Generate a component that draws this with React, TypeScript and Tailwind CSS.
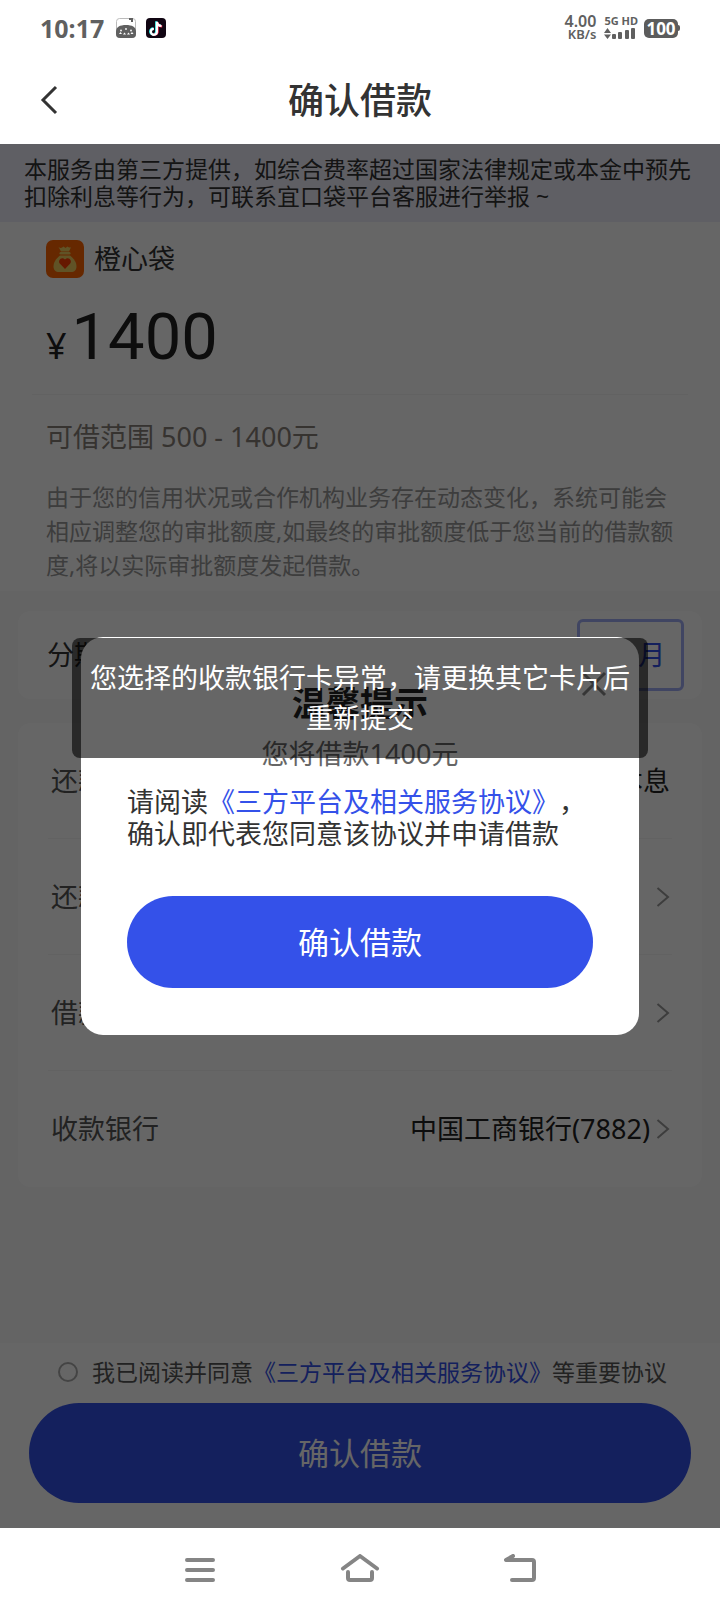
import { useState } from 'react'

const details = [
  { label: '还款方式', value: '等额本息', arrow: false, gap: '' },
  { label: '还款计划', value: '查看', arrow: true, gap: 'mr-5' },
  { label: '借款用途', value: '日常消费', arrow: true, gap: 'mr-5' },
  { label: '收款银行', value: '中国工商银行(7882)', arrow: true, gap: 'mr-[6px]' },
]

function ChevronRight() {
  return (
    <svg width="14" height="22" viewBox="0 0 14 22" fill="none" stroke="#999" strokeWidth="2">
      <path d="M1.5 2 12 11 1.5 20" />
    </svg>
  )
}

function StatusBar() {
  return (
    <div className="flex h-14 items-center justify-between px-10 text-[#606060]">
      <div className="flex items-center">
        <span className="font-bold text-[25px] leading-8">10:17</span>
        <svg className="ml-3" width="20" height="20" viewBox="0 0 20 20">
          <rect x="0.5" y="0.5" width="19" height="19" rx="3" fill="#fff" stroke="#bbb" />
          <path d="M13 0h4v4h-2V2h-2z" fill="#606060" />
          <path d="M0 13.500C0 9 4 7 10 7s10 2 10 6.500V16q0 4-4 4H4q-4 0-4-4z" fill="#606060" />
          <g fill="#fff">
            <circle cx="5" cy="12.500" r="0.900" />
            <circle cx="10" cy="11" r="0.900" />
            <circle cx="15" cy="12.500" r="0.900" />
            <path d="M3 16l1.500-2L6 16zM7 16.500l1.500-2 1.500 2zM11 16.500l1.500-2 1.500 2zM14.500 16l1.500-2 1.500 2z" />
          </g>
        </svg>
        <svg className="ml-[10px]" width="20" height="20" viewBox="0 0 20 20">
          <rect width="20" height="20" rx="4" fill="#100512" />
          <g fill="none" strokeWidth="2.2">
            <path d="M10.2 3.3v10a3 3 0 1 1-3-3M10.2 3.5c.3 2.4 2 3.8 4.6 4" stroke="#25f4ee" />
            <path d="M11.6 4.3v10a3 3 0 0 1-5 1.6M11.6 4.5c.3 2.4 2 3.8 4.6 4" stroke="#fe2c55" />
            <path d="M10.9 3.8v10a3 3 0 1 1-3-3M10.9 4c.3 2.4 2 3.8 4.6 4" stroke="#fff" />
          </g>
        </svg>
      </div>
      <div className="flex items-center">
        <div className="flex flex-col items-end font-semibold">
          <span className="text-[16px] leading-[13px]">4.00</span>
          <span className="text-[13px] leading-[13px]">KB/s</span>
        </div>
        <div className="ml-2 flex flex-col gap-[2px]">
          <span className="font-bold text-[11px] leading-[10px]">5G HD</span>
          <svg width="32" height="12" viewBox="0 0 32 12" fill="#606060">
            <path d="M3.5 0 7 5H0zM3.5 11 0 6.5h7z" />
            <rect x="8" y="6" width="4" height="5" rx="1" />
            <rect x="14" y="4" width="4" height="7" rx="1" />
            <rect x="21" y="2" width="4" height="9" rx="1" />
            <rect x="27" y="0" width="4" height="11" rx="1" />
          </svg>
        </div>
        <div className="ml-[6px] flex items-center">
          <span className="flex h-[19px] w-[34px] items-center justify-center rounded-[5px] bg-[#5c5c5c] font-bold text-[17px] text-white leading-[19px]">
            100
          </span>
          <span className="h-[6px] w-[2px] rounded-r-sm bg-[#5c5c5c]" />
        </div>
      </div>
    </div>
  )
}

function MoneyBagLogo() {
  return (
    <svg width="38" height="38" viewBox="0 0 38 38">
      <rect width="38" height="38" rx="7" fill="#ff6400" />
      <path d="M12.5 7c2 1.500 3.500 1 5-.5l2 1.500 2-1.500c1 1 2 1.300 3.500.8l-2 4.200h-8z" fill="#f0d060" />
      <rect x="13.500" y="12" width="11" height="2.500" rx="1.200" fill="#f0d060" />
      <path
        d="M14 15.500h10c4 3 6.500 7 6.500 11 0 3.500-2 5.500-5.500 5.500H13c-3.500 0-5.500-2-5.500-5.500 0-4 2.500-8 6.500-11z"
        fill="#f0d060"
      />
      <path d="M19 29l-5-5.200c-2.800-3.200 1.500-8 5-4.300 3.500-3.700 7.800 1.100 5 4.300z" fill="#ff3c00" />
    </svg>
  )
}

function ConfirmDialog({ onClose }: { onClose: () => void }) {
  return (
    <div className="absolute inset-0 flex items-center bg-black/60 px-[81px]">
      <div className="relative w-full rounded-[22px] bg-white px-[46px] pt-[43px] pb-[47px]" role="dialog" aria-modal="true">
        <button className="absolute top-[34px] right-8" aria-label="关闭" onClick={onClose} type="button">
          <svg width="26" height="26" viewBox="0 0 26 26" fill="none" stroke="#888" strokeWidth="3">
            <path d="M2 2l22 22M24 2 2 24" />
          </svg>
        </button>
        <h2 className="text-center font-bold text-[34px] text-[#222] leading-[46px]">温馨提示</h2>
        <p className="mt-2 text-center text-[27px] text-[#666] leading-10">您将借款1400元</p>
        <p className="mt-3 whitespace-nowrap text-[27px] text-[#333] leading-8">
          请阅读
          <a className="text-[#3451e9]" href="#agreement">
            《三方平台及相关服务协议》
          </a>
          ，
          <br />
          确认即代表您同意该协议并申请借款
        </p>
        <button className="mt-[46px] h-[92px] w-full rounded-full bg-[#3451e9] text-[31px] text-white" type="button">
          确认借款
        </button>
      </div>
    </div>
  )
}

function Toast({ message }: { message: string }) {
  return (
    <div className="absolute inset-x-0 top-[494px] flex justify-center">
      <p
        className="w-4/5 rounded-lg bg-black/60 px-4 py-5 text-center text-[27px] text-white leading-10"
        role="status"
      >
        {message}
      </p>
    </div>
  )
}

export default function App() {
  const [open, setOpen] = useState(true)

  return (
    <div className="flex min-h-screen flex-col bg-white font-['Noto_Sans','Noto_Sans_CJK_SC',sans-serif] [text-spacing-trim:space-all]">
      <StatusBar />
      <header className="relative flex h-22 items-center justify-center">
        <button className="absolute left-10" aria-label="返回" type="button">
          <svg width="18" height="30" viewBox="0 0 18 30" fill="none" stroke="#333" strokeWidth="3">
            <path d="M16 2 3 15l13 13" />
          </svg>
        </button>
        <h1 className="pt-[2px] font-medium text-[36px] text-[#333] leading-[48px]">确认借款</h1>
      </header>

      <main className="relative flex flex-1 flex-col bg-[#f9f9f9]">
        <p className="bg-[#eeeefa] py-3 pr-5 pl-6 text-[23px] text-[#333] leading-[27px]">
          本服务由第三方提供，如综合费率超过国家法律规定或本金中预先扣除利息等行为，可联系宜口袋平台客服进行举报 ~
        </p>

        <section className="bg-white pt-[18px] pb-[9px]">
          <div className="flex items-center gap-[10px] px-[46px]">
            <MoneyBagLogo />
            <span className="text-[27px] text-[#333] leading-[38px]">橙心袋</span>
          </div>
          <div className="mt-[23px] flex items-baseline gap-[5px] px-[46px] text-[#222]">
            <span className="text-[36px] leading-none">¥</span>
            <span className="font-[Roboto,sans-serif] text-[65px] leading-[72px]">1400</span>
          </div>
          <hr className="mx-8 mt-[21px] border-[#f5f5f5]" />
          <p className="mt-[22px] px-[46px] text-[27px] text-[#888078] leading-10">可借范围 500 - 1400元</p>
          <p className="mt-[23px] px-[46px] text-[23px] text-[#999] leading-[34px]">
            由于您的信用状况或合作机构业务存在动态变化，系统可能会相应调整您的审批额度,如最终的审批额度低于您当前的借款额度,将以实际审批额度发起借款。
          </p>
        </section>

        <section className="mx-[18px] mt-5 flex items-center justify-between rounded-xl bg-white py-2 pr-[18px] pl-[29px]">
          <span className="text-[27px] text-[#333] leading-10">分期期限</span>
          <button
            className="h-18 w-[107px] rounded-md border-3 border-[#a0adf5] text-[27px] text-[#3451e9]"
            type="button"
          >
            1个月
          </button>
        </section>

        <section className="mx-[18px] mt-6 rounded-xl bg-white px-[30px]">
          {details.map(({ label, value, arrow, gap }) => (
            <div
              className="flex h-29 items-center border-[#f5f5f5] border-b pr-[2px] pl-[3px] text-[27px] leading-10 last:border-b-0"
              key={label}
            >
              <span className="text-[#555]">{label}</span>
              <span className={`ml-auto text-[#222] ${gap}`}>{value}</span>
              {arrow && <ChevronRight />}
            </div>
          ))}
        </section>

        <footer className="mt-auto bg-white px-[29px] pt-3 pb-[25px]">
          <div className="flex items-center whitespace-nowrap pl-[29px] text-[23px] text-[#555] leading-[34px]">
            <input
              className="mr-[14px] size-5 appearance-none rounded-full border-2 border-[#aaa]"
              id="agree"
              type="radio"
            />
            <label htmlFor="agree">我已阅读并同意</label>
            <a className="text-[#3451e9]" href="#agreement">
              《三方平台及相关服务协议》
            </a>
            <span>等重要协议</span>
          </div>
          <button
            className="mt-[14px] h-[100px] w-full rounded-full bg-[#3451e9] text-[31px] text-white"
            onClick={() => setOpen(true)}
            type="button"
          >
            确认借款
          </button>
        </footer>

        {open && <ConfirmDialog onClose={() => setOpen(false)} />}
        <Toast message="您选择的收款银行卡异常，请更换其它卡片后重新提交" />
      </main>

      {/* Android system navigation */}
      <nav className="flex h-21 items-center justify-center">
        <button className="flex w-40 justify-center" aria-label="菜单" type="button">
          <svg width="40" height="32" viewBox="0 0 40 32" stroke="#858585" strokeWidth="4" strokeLinecap="round">
            <path d="M7 6h26M7 16h26M7 26h26" />
          </svg>
        </button>
        <button className="flex w-40 justify-center" aria-label="主页" type="button">
          <svg width="40" height="32" viewBox="0 0 40 32" fill="none" stroke="#858585" strokeWidth="4" strokeLinecap="round" strokeLinejoin="round">
            <path d="M3 14.500 20 2l17 12.500M8 18v6q0 2 2 2h20q2 0 2-2v-6" />
          </svg>
        </button>
        <button className="flex w-40 justify-center" aria-label="返回上一页" type="button">
          <svg width="40" height="32" viewBox="0 0 40 32" fill="none" stroke="#858585" strokeWidth="4" strokeLinecap="round" strokeLinejoin="round">
            <path d="M13 2 6 6h26q2 0 2 2v16q0 2-2 2H12" />
          </svg>
        </button>
      </nav>
    </div>
  )
}
